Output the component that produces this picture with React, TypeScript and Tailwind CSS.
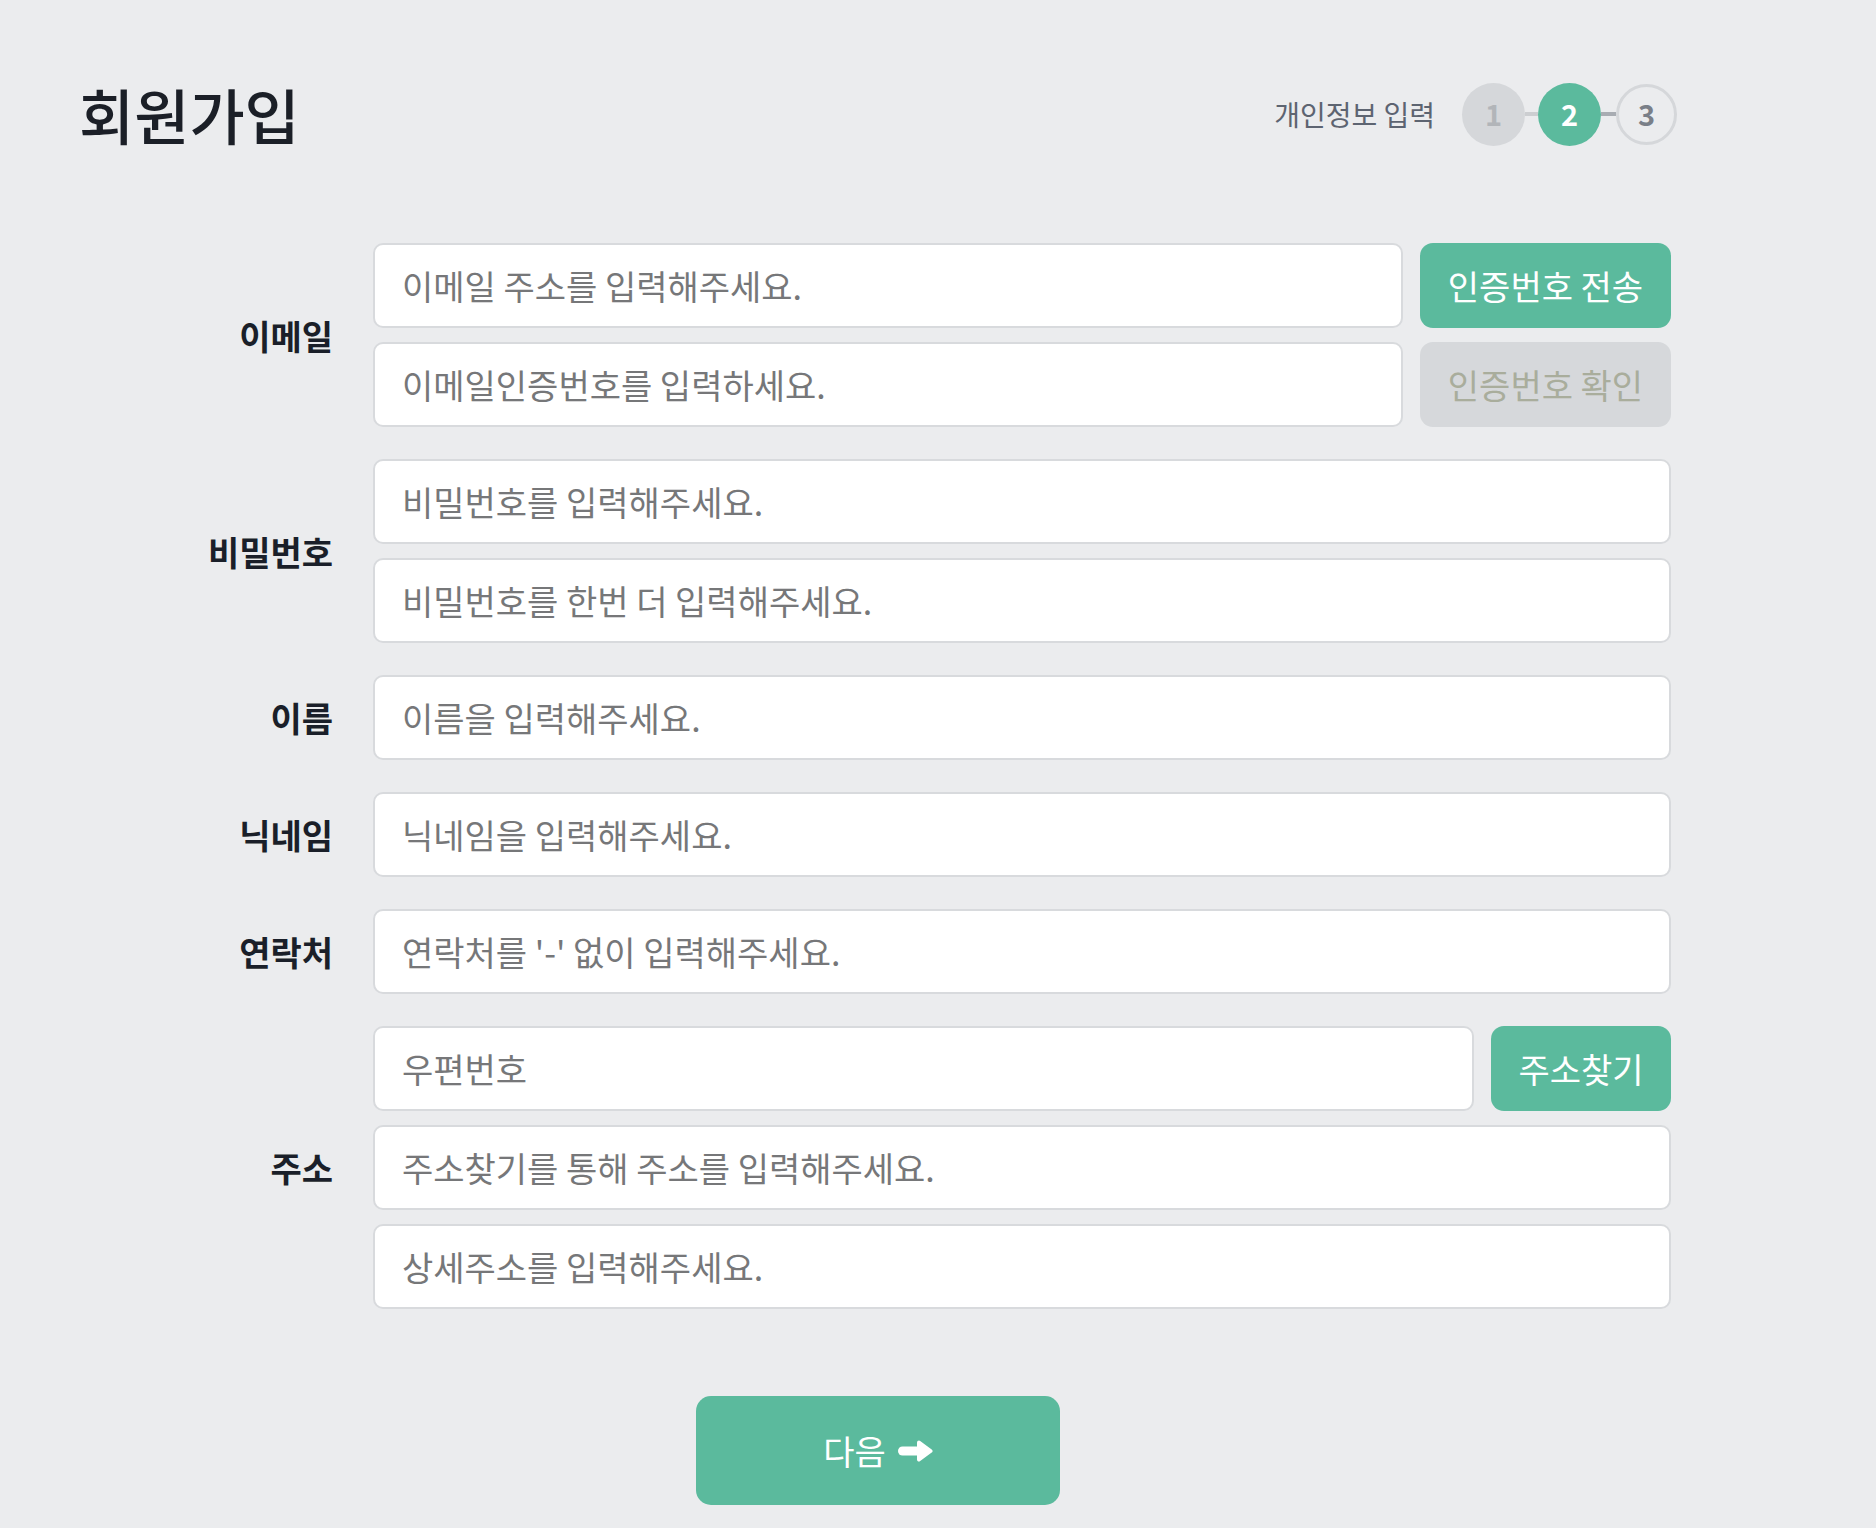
import type { ReactNode } from "react";

const field =
  "h-[85px] w-full min-w-0 rounded-[10px] border-2 border-[#d8dadd] bg-white px-[27px] text-[34px] text-[#1b1f27] outline-none placeholder:text-[#767779]";

function Input({ placeholder, muted }: { placeholder: string; muted?: boolean }) {
  return (
    <input
      type="text"
      placeholder={placeholder}
      readOnly={muted}
      className={muted ? `${field} bg-[#e9eaec]` : field}
    />
  );
}

function Action({ children, width, off }: { children: ReactNode; width: string; off?: boolean }) {
  return (
    <button
      type="button"
      className={`${width} h-[85px] shrink-0 whitespace-nowrap rounded-[13px] text-[34px] ${
        off ? "bg-[#d6d8db] text-[#a9ad9c]" : "bg-[#5bba9d] text-white"
      }`}
    >
      {children}
    </button>
  );
}

function Row({ label, children }: { label: string; children: ReactNode }) {
  return (
    <div className="flex items-center gap-[40px]">
      <label className="w-[254px] shrink-0 text-right text-[34px] font-bold text-[#1a1f29]">{label}</label>
      <div className="flex flex-1 flex-col gap-[14px]">{children}</div>
    </div>
  );
}

function Stepper() {
  return (
    <div className="flex items-center">
      <span className="mr-[27px] text-[28px] text-[#5d6471]">개인정보 입력</span>
      <div className="flex h-[63px] w-[63px] items-center justify-center rounded-full bg-[#d5d7da] text-[29px] font-bold text-[#b2b5b9]">
        1
      </div>
      <div className="h-[4px] w-[13px] bg-[#ccced1]" />
      <div className="flex h-[63px] w-[63px] items-center justify-center rounded-full bg-[#5bba9d] text-[29px] font-bold text-white">
        2
      </div>
      <div className="h-[4px] w-[15px] bg-[#a8acb2]" />
      <div className="flex h-[61px] w-[61px] items-center justify-center rounded-full border-[3px] border-[#d5d7da] text-[29px] font-bold text-[#7a7f88]">
        3
      </div>
    </div>
  );
}

export default function App() {
  return (
    <div className="min-h-[1528px] w-full bg-[#ebecee] pl-[79px] pt-[50px] font-['Noto_Sans_CJK_KR','Noto_Sans',sans-serif]">
      <div className="w-[1598px]">
        <header className="flex h-[128px] items-center justify-between">
          <h1 className="text-[60px] font-medium leading-none text-[#1b1f27]">회원가입</h1>
          <Stepper />
        </header>

        <form className="mt-[65px] flex flex-col gap-[32px] pr-[6px]">
          <Row label="이메일">
            <div className="flex gap-[17px]">
              <Input placeholder="이메일 주소를 입력해주세요." />
              <Action width="w-[251px]">인증번호 전송</Action>
            </div>
            <div className="flex gap-[17px]">
              <Input placeholder="이메일인증번호를 입력하세요." muted />
              <Action width="w-[251px]" off>
                인증번호 확인
              </Action>
            </div>
          </Row>

          <Row label="비밀번호">
            <Input placeholder="비밀번호를 입력해주세요." />
            <Input placeholder="비밀번호를 한번 더 입력해주세요." />
          </Row>

          <Row label="이름">
            <Input placeholder="이름을 입력해주세요." />
          </Row>

          <Row label="닉네임">
            <Input placeholder="닉네임을 입력해주세요." />
          </Row>

          <Row label="연락처">
            <Input placeholder="연락처를 '-' 없이 입력해주세요." />
          </Row>

          <Row label="주소">
            <div className="flex gap-[17px]">
              <Input placeholder="우편번호" />
              <Action width="w-[180px]">주소찾기</Action>
            </div>
            <Input placeholder="주소찾기를 통해 주소를 입력해주세요." />
            <Input placeholder="상세주소를 입력해주세요." />
          </Row>
        </form>

        <div className="mt-[87px] flex justify-center">
          <button
            type="button"
            className="flex h-[109px] w-[364px] items-center justify-center gap-[11px] rounded-[15px] bg-[#5bba9d] text-[34px] text-white"
          >
            다음
            <svg width="36" height="22" viewBox="0 0 36 22" fill="white">
              <rect x="1" y="6.5" width="23" height="9" rx="4.5" />
              <path d="M22 2.5 L33.5 11 L22 19.5 Z" stroke="white" strokeWidth="4" strokeLinejoin="round" />
            </svg>
          </button>
        </div>
      </div>
    </div>
  );
}
